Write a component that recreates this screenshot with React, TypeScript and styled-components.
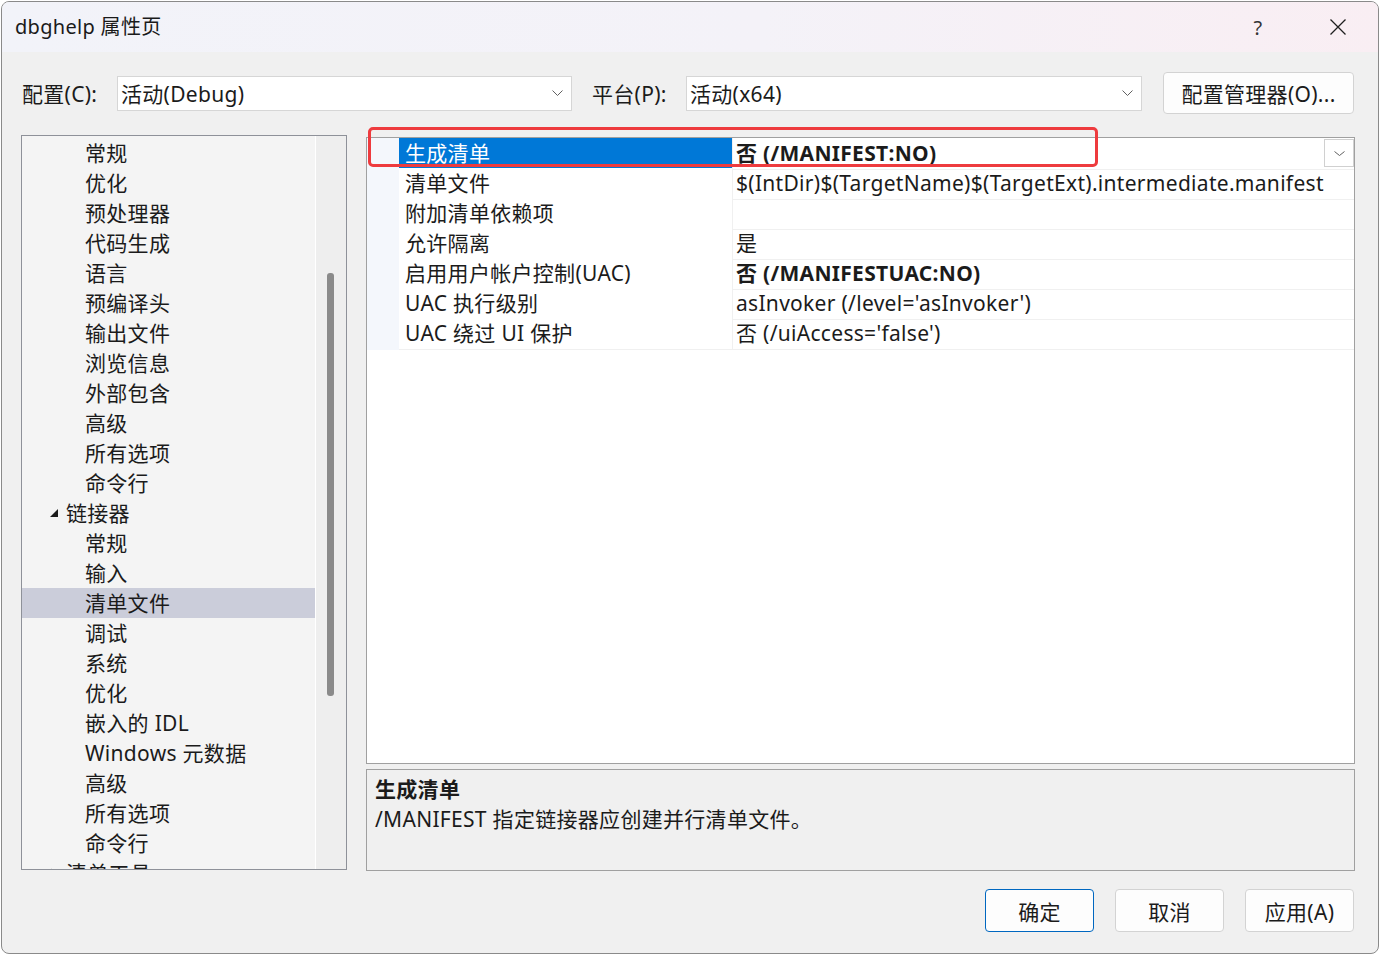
import React from 'react';
import styled, { createGlobalStyle } from 'styled-components';

const FONT = `"Noto Sans", "Noto Sans CJK SC", sans-serif`;

const Global = createGlobalStyle`
  html, body { margin: 0; padding: 0; background: #ffffff; }
  body { font-family: ${FONT}; color: #1b1b1b; }
  * { box-sizing: border-box; }
`;

const Desktop = styled.div`
  width: 1380px;
  height: 955px;
  padding: 1px;
  background: #ffffff;
`;

const Window = styled.div`
  width: 1378px;
  height: 953px;
  border: 1px solid #8a8a8a;
  border-radius: 8px;
  overflow: hidden;
  display: flex;
  flex-direction: column;
  background: #f0f0f0;
  font-family: ${FONT};
  font-size: 21px;
  letter-spacing: 0.3px;
`;

const TitleBar = styled.div`
  height: 50px;
  flex: none;
  display: flex;
  align-items: center;
  padding: 0 17px 0 13px;
  background: linear-gradient(90deg, #f2f3f9 0%, #f4f2f8 55%, #f9eef3 100%);
`;

const Title = styled.div`
  flex: 1;
  font-size: 20px;
  line-height: 50px;
  color: #1a1a1a;
`;

const TitleButton = styled.div<{ $ml?: number }>`
  width: 46px;
  height: 50px;
  display: flex;
  align-items: center;
  justify-content: center;
  margin-left: ${(p) => p.$ml ?? 0}px;
  color: #333;
  font-size: 20px;
`;

const Body = styled.div`
  flex: 1;
  display: flex;
  flex-direction: column;
  padding: 20px 23px 21px 19px;
`;

const TopRow = styled.div`
  height: 42px;
  display: flex;
  align-items: center;
`;

const Label = styled.div<{ $w: number }>`
  width: ${(p) => p.$w}px;
  padding-left: 1px;
  white-space: nowrap;
`;

const Combo = styled.div<{ $w: number }>`
  width: ${(p) => p.$w}px;
  height: 35px;
  background: #ffffff;
  border: 1px solid #d6d6d6;
  display: flex;
  align-items: center;
  padding: 0 8px 0 3px;
`;

const ComboText = styled.span`
  flex: 1;
  white-space: nowrap;
`;

const Gap = styled.div<{ $w: number }>`
  width: ${(p) => p.$w}px;
  flex: none;
`;

const PushButton = styled.button<{ $primary?: boolean; $w: number; $h: number }>`
  width: ${(p) => p.$w}px;
  height: ${(p) => p.$h}px;
  background: #fdfdfd;
  border: 1px solid ${(p) => (p.$primary ? '#0067c0' : '#d3d3d3')};
  border-radius: 4px;
  font-family: ${FONT};
  font-size: 21px;
  letter-spacing: 0.3px;
  color: #1b1b1b;
  padding: 0;
  display: flex;
  align-items: center;
  justify-content: center;
  white-space: nowrap;
`;

const Main = styled.div`
  margin-top: 21px;
  height: 736px;
  display: grid;
  grid-template-columns: 326px 989px;
  column-gap: 19px;
`;

const TreePanel = styled.div`
  height: 735px;
  border: 1px solid #8e9199;
  background: #f4f4f4;
  display: flex;
  overflow: hidden;
`;

const TreeList = styled.div`
  width: 294px;
  flex: none;
  border-right: 1px solid #ffffff;
  padding-top: 2px;
  overflow: hidden;
`;

const TreeRow = styled.div<{ $level: number; $selected?: boolean }>`
  height: 30px;
  line-height: 30px;
  display: flex;
  align-items: center;
  padding-left: ${(p) => (p.$level === 0 ? 27 : 63)}px;
  background: ${(p) => (p.$selected ? '#cbcdda' : 'transparent')};
  white-space: nowrap;
  color: #1b1b1b;
`;

const Twisty = styled.span`
  width: 17px;
  display: inline-flex;
  align-items: center;
`;

const ScrollTrack = styled.div`
  flex: 1;
  background: #eeeeee;
  padding: 137px 0 0 11px;
`;

const Thumb = styled.div`
  width: 7px;
  height: 423px;
  border-radius: 3px;
  background: #8a8a8a;
`;

const RightCol = styled.div`
  position: relative;
  margin-top: 2px;
  display: flex;
  flex-direction: column;
`;

const Grid = styled.div`
  height: 627px;
  border: 1px solid #a0a0a0;
  background: #ffffff;
`;

const PropRow = styled.div`
  height: 30px;
  display: grid;
  grid-template-columns: 32px 334px 1fr;
`;

const Gutter = styled.div`
  background: #f4f7fc;
`;

const NameCell = styled.div<{ $selected?: boolean }>`
  border-right: 1px solid #f0f0f0;
  border-bottom: 1px solid #f0f0f0;
  background: ${(p) => (p.$selected ? '#0078d7' : '#ffffff')};
  color: ${(p) => (p.$selected ? '#ffffff' : '#1b1b1b')};
  padding-left: 6px;
  line-height: 31px;
  white-space: nowrap;
`;

const ValueCell = styled.div<{ $bold?: boolean }>`
  border-bottom: 1px solid #f0f0f0;
  display: flex;
  align-items: center;
  padding-left: 3px;
  font-weight: ${(p) => (p.$bold ? 700 : 400)};
  white-space: nowrap;
  line-height: 31px;
`;

const ValueText = styled.span`
  flex: 1;
`;

const CellDrop = styled.div`
  width: 30px;
  height: 28px;
  border: 1px solid #d0d0d0;
  background: #ffffff;
  display: flex;
  align-items: center;
  justify-content: center;
  align-self: flex-start;
  margin-top: 1px;
`;

const Highlight = styled.div`
  position: absolute;
  left: 2px;
  top: -10px;
  width: 730px;
  height: 40px;
  border: 3px solid #ee3b3e;
  border-radius: 5px;
  pointer-events: none;
`;

const Desc = styled.div`
  margin-top: 5px;
  height: 102px;
  border: 1px solid #a0a0a0;
  background: #f0f0f0;
  padding: 4px 8px;
`;

const DescTitle = styled.div`
  font-weight: 700;
  line-height: 30px;
`;

const DescText = styled.div`
  line-height: 30px;
`;

const ButtonRow = styled.div`
  margin-top: 18px;
  height: 43px;
  display: flex;
  justify-content: flex-end;
  gap: 21px;
  padding-right: 1px;
`;

const Chevron = ({ w = 11, h = 6, color = '#606060' }: { w?: number; h?: number; color?: string }) => (
  <svg width={w} height={h} viewBox={`0 0 ${w} ${h}`}>
    <polyline points={`0.5,0.5 ${w / 2},${h - 0.5} ${w - 0.5},0.5`} fill="none" stroke={color} strokeWidth="1" />
  </svg>
);

const CloseIcon = () => (
  <svg width="16" height="16" viewBox="0 0 16 16">
    <path d="M0.5 0.5 L15.5 15.5 M15.5 0.5 L0.5 15.5" stroke="#1f1f1f" strokeWidth="1.3" />
  </svg>
);

const Expanded = () => (
  <svg width="10" height="10" viewBox="0 0 10 10">
    <polygon points="9,1 9,9 1,9" fill="#1b1b1b" />
  </svg>
);

const Collapsed = () => (
  <svg width="10" height="10" viewBox="0 0 10 10">
    <polygon points="2,1 7,5 2,9" fill="none" stroke="#444" strokeWidth="1" />
  </svg>
);

type TreeItem = { label: string; level: 0 | 1; expanded?: boolean; selected?: boolean };

const treeItems: TreeItem[] = [
  { label: '常规', level: 1 },
  { label: '优化', level: 1 },
  { label: '预处理器', level: 1 },
  { label: '代码生成', level: 1 },
  { label: '语言', level: 1 },
  { label: '预编译头', level: 1 },
  { label: '输出文件', level: 1 },
  { label: '浏览信息', level: 1 },
  { label: '外部包含', level: 1 },
  { label: '高级', level: 1 },
  { label: '所有选项', level: 1 },
  { label: '命令行', level: 1 },
  { label: '链接器', level: 0, expanded: true },
  { label: '常规', level: 1 },
  { label: '输入', level: 1 },
  { label: '清单文件', level: 1, selected: true },
  { label: '调试', level: 1 },
  { label: '系统', level: 1 },
  { label: '优化', level: 1 },
  { label: '嵌入的 IDL', level: 1 },
  { label: 'Windows 元数据', level: 1 },
  { label: '高级', level: 1 },
  { label: '所有选项', level: 1 },
  { label: '命令行', level: 1 },
  { label: '清单工具', level: 0, expanded: false },
];

type Prop = { name: string; value: string; bold?: boolean; selected?: boolean; drop?: boolean };

const props: Prop[] = [
  { name: '生成清单', value: '否 (/MANIFEST:NO)', bold: true, selected: true, drop: true },
  { name: '清单文件', value: '$(IntDir)$(TargetName)$(TargetExt).intermediate.manifest' },
  { name: '附加清单依赖项', value: '' },
  { name: '允许隔离', value: '是' },
  { name: '启用用户帐户控制(UAC)', value: '否 (/MANIFESTUAC:NO)', bold: true },
  { name: 'UAC 执行级别', value: "asInvoker (/level='asInvoker')" },
  { name: 'UAC 绕过 UI 保护', value: "否 (/uiAccess='false')" },
];

export default function App() {
  return (
    <Desktop>
      <Global />
      <Window>
        <TitleBar>
          <Title>dbghelp 属性页</Title>
          <TitleButton>?</TitleButton>
          <TitleButton $ml={34}>
            <CloseIcon />
          </TitleButton>
        </TitleBar>
        <Body>
          <TopRow>
            <Label $w={96}>配置(C):</Label>
            <Combo $w={455}>
              <ComboText>活动(Debug)</ComboText>
              <Chevron />
            </Combo>
            <Gap $w={19} />
            <Label $w={95}>平台(P):</Label>
            <Combo $w={456}>
              <ComboText>活动(x64)</ComboText>
              <Chevron />
            </Combo>
            <Gap $w={21} />
            <PushButton $w={191} $h={42}>配置管理器(O)...</PushButton>
          </TopRow>
          <Main>
            <TreePanel>
              <TreeList>
                {treeItems.map((t, i) => (
                  <TreeRow key={i} $level={t.level} $selected={t.selected}>
                    {t.level === 0 && <Twisty>{t.expanded ? <Expanded /> : <Collapsed />}</Twisty>}
                    {t.label}
                  </TreeRow>
                ))}
              </TreeList>
              <ScrollTrack>
                <Thumb />
              </ScrollTrack>
            </TreePanel>
            <RightCol>
              <Grid>
                {props.map((p, i) => (
                  <PropRow key={i}>
                    <Gutter />
                    <NameCell $selected={p.selected}>{p.name}</NameCell>
                    <ValueCell $bold={p.bold}>
                      <ValueText>{p.value}</ValueText>
                      {p.drop && (
                        <CellDrop>
                          <Chevron h={5} />
                        </CellDrop>
                      )}
                    </ValueCell>
                  </PropRow>
                ))}
              </Grid>
              <Desc>
                <DescTitle>生成清单</DescTitle>
                <DescText>/MANIFEST 指定链接器应创建并行清单文件。</DescText>
              </Desc>
              <Highlight />
            </RightCol>
          </Main>
          <ButtonRow>
            <PushButton $primary $w={109} $h={43}>确定</PushButton>
            <PushButton $w={109} $h={43}>取消</PushButton>
            <PushButton $w={109} $h={43}>应用(A)</PushButton>
          </ButtonRow>
        </Body>
      </Window>
    </Desktop>
  );
}
